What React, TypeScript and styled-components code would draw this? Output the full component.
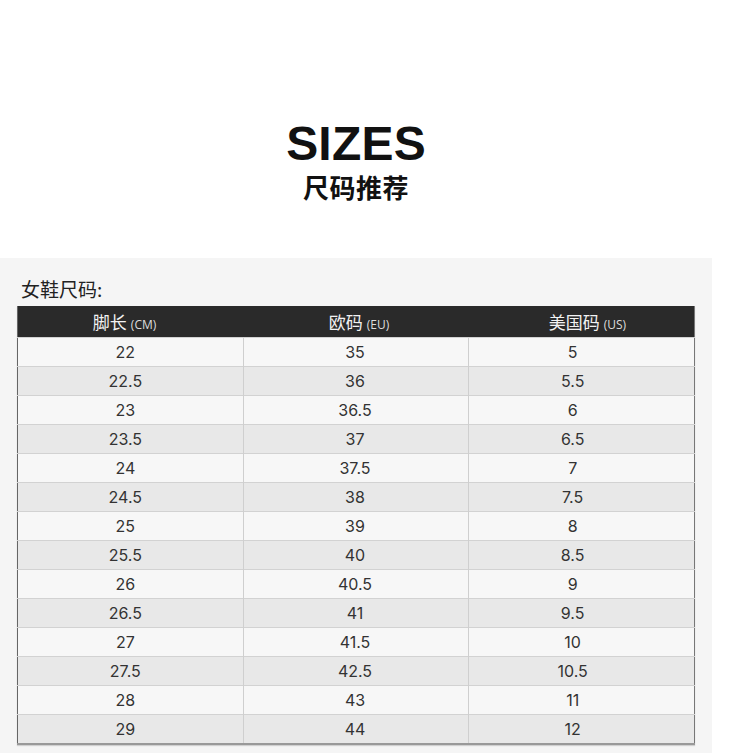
import React from "react";
import styled, { createGlobalStyle } from "styled-components";

const GlobalStyle = createGlobalStyle`
  html, body { margin: 0; padding: 0; background: #ffffff; }
  body { font-family: "Noto Sans CJK SC", "Noto Sans", sans-serif; }
`;

const Page = styled.div`
  width: 712px;
  display: flex;
  flex-direction: column;
`;

const Hero = styled.header`
  height: 258px;
  display: flex;
  flex-direction: column;
  align-items: center;
  box-sizing: border-box;
  padding-top: 119px;
`;

const Title = styled.h1`
  margin: 0;
  font-family: "Liberation Sans", Arial, sans-serif;
  font-weight: 700;
  font-size: 48px;
  line-height: 50px;
  letter-spacing: 0.2px;
  color: #111;
`;

const Subtitle = styled.h2`
  margin: 2px 0 0;
  font-family: "Noto Sans CJK SC", sans-serif;
  font-weight: 700;
  font-size: 26px;
  line-height: 32px;
  letter-spacing: 0.5px;
  color: #111;
`;

const Panel = styled.section`
  background: #f5f5f5;
  padding: 18px 17px 12px 17px;
  display: flex;
  flex-direction: column;
`;

const Caption = styled.div`
  font-family: "Noto Sans CJK SC", sans-serif;
  font-size: 19px;
  line-height: 26px;
  color: #222;
  padding-left: 4px;
  margin-bottom: 4px;
`;

const Table = styled.table`
  width: 678px;
  border-collapse: collapse;
  table-layout: fixed;
  border-left: 1px solid #666;
  border-right: 1px solid #777;
  border-bottom: 2px solid #999;
  box-shadow: 0 1px 1px rgba(0, 0, 0, 0.15);
`;

const shift = (o: number) =>
  o >= 0 ? `0 0 0 ${o * 2}px` : `0 ${-o * 2}px 0 0`;

const HeadCell = styled.th<{ $offset: number }>`
  background: #2a2a2a;
  color: #f2f2f2;
  height: 31px;
  padding: ${(p) => shift(p.$offset)};
  font-family: "Noto Sans CJK SC", sans-serif;
  font-weight: 400;
  font-size: 17px;
  line-height: 1;
  text-align: center;
  vertical-align: middle;
`;

const Unit = styled.span`
  font-family: "Open Sans", "Noto Sans", sans-serif;
  font-size: 12px;
  line-height: 1;
  margin-left: 4px;
  color: #ddd;
`;

const Row = styled.tr<{ $alt: boolean }>`
  background: ${(p) => (p.$alt ? "#e8e8e8" : "#f7f7f7")};
`;

const Cell = styled.td<{ $offset: number }>`
  height: 28px;
  padding: ${(p) => shift(p.$offset)};
  text-align: center;
  vertical-align: middle;
  font-family: "Inter", "Noto Sans", sans-serif;
  font-size: 16px;
  line-height: 1;
  color: #333;
  border-top: 1px solid #d2d2d2;
  & + & {
    border-left: 1px solid #cfcfcf;
  }
`;

const headOffsets = [-6, 3, 6];
const cellOffsets = [-5, -1, -9];

const heads: [string, string][] = [
  ["脚长", "(CM)"],
  ["欧码", "(EU)"],
  ["美国码", "(US)"],
];

const rows: [string, string, string][] = [
  ["22", "35", "5"],
  ["22.5", "36", "5.5"],
  ["23", "36.5", "6"],
  ["23.5", "37", "6.5"],
  ["24", "37.5", "7"],
  ["24.5", "38", "7.5"],
  ["25", "39", "8"],
  ["25.5", "40", "8.5"],
  ["26", "40.5", "9"],
  ["26.5", "41", "9.5"],
  ["27", "41.5", "10"],
  ["27.5", "42.5", "10.5"],
  ["28", "43", "11"],
  ["29", "44", "12"],
];

export default function App() {
  return (
    <Page>
      <GlobalStyle />
      <Hero>
        <Title>SIZES</Title>
        <Subtitle>尺码推荐</Subtitle>
      </Hero>
      <Panel>
        <Caption>女鞋尺码:</Caption>
        <Table>
          <thead>
            <tr>
              {heads.map(([label, unit], j) => (
                <HeadCell key={j} $offset={headOffsets[j]}>
                  {label}
                  <Unit>{unit}</Unit>
                </HeadCell>
              ))}
            </tr>
          </thead>
          <tbody>
            {rows.map((r, i) => (
              <Row key={i} $alt={i % 2 === 1}>
                {r.map((v, j) => (
                  <Cell key={j} $offset={cellOffsets[j]}>
                    {v}
                  </Cell>
                ))}
              </Row>
            ))}
          </tbody>
        </Table>
      </Panel>
    </Page>
  );
}
